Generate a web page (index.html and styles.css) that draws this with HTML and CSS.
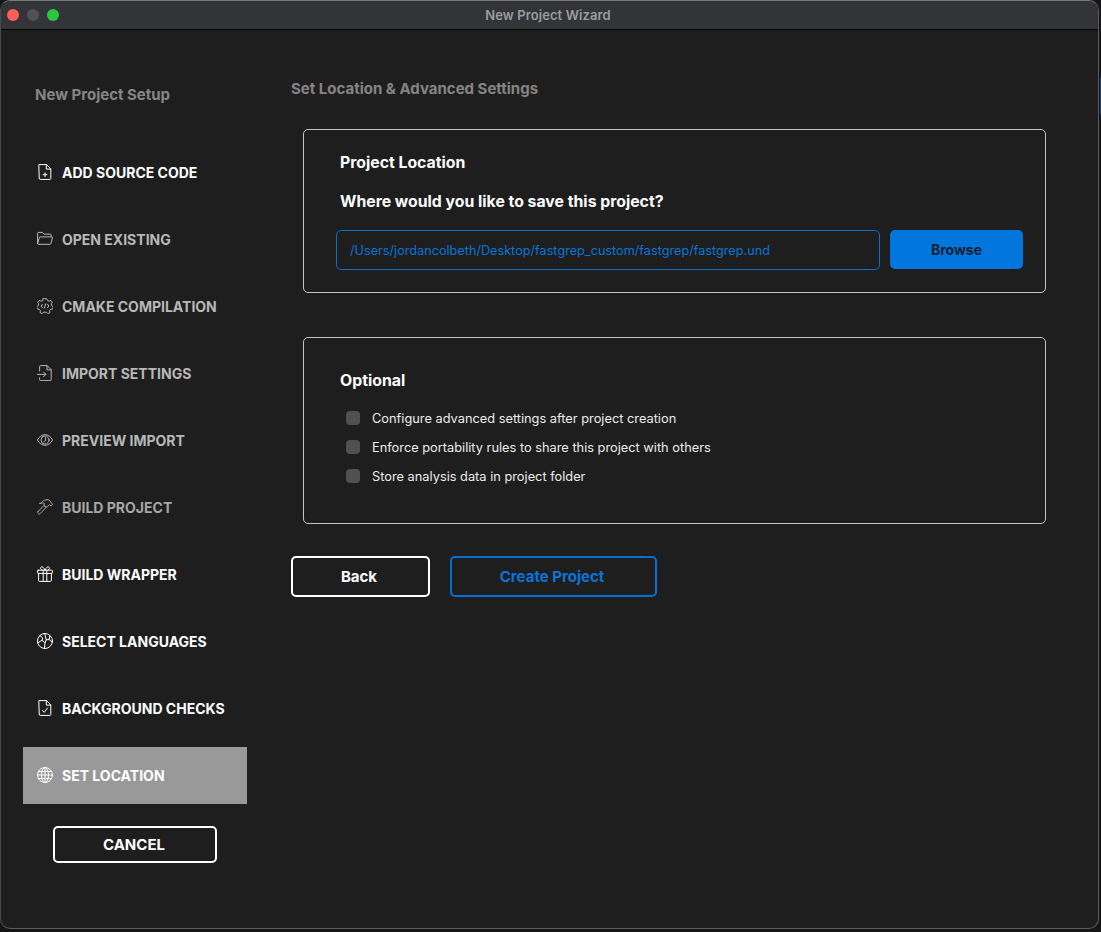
FILE: index.html
```html
<!DOCTYPE html>
<html lang="en">
<head>
<meta charset="utf-8">
<title>New Project Wizard</title>
<link rel="stylesheet" href="styles.css">
</head>
<body>
<div class="window">
  <header class="titlebar">
    <div class="lights"><span class="light red"></span><span class="light grey"></span><span class="light green"></span></div>
    <div class="wintitle">New Project Wizard</div>
  </header>
  <div class="content">
    <aside class="sidebar">
      <h2 class="side-title">New Project Setup</h2>
      <nav class="nav">
        <div class="nav-item bright"><svg class="ico" viewBox="0 0 16 16"><path d="M2.200.6h7.300L13.800 5v9.400a1 1 0 0 1-1 1H3.200a1 1 0 0 1-1-1z M9.300.6v4.500h4.500"/><path d="M8 8.800v3.800M6.100 10.700h3.800"/></svg><span>ADD SOURCE CODE</span></div>
        <div class="nav-item soft"><svg class="ico" viewBox="0 0 16 16"><path d="M.6 12.500V2.400a1 1 0 0 1 1-1h3.800l1.500 1.700h6.300a1 1 0 0 1 1 1v1.400"/><path d="M.6 12.600l1.700-5.900a1 1 0 0 1 1-.8h11.300a.8.8 0 0 1 .8 1l-1.500 5.600a1 1 0 0 1-1 .8H1.800a1 1 0 0 1-1.200-.7z"/></svg><span>OPEN EXISTING</span></div>
        <div class="nav-item soft"><svg class="ico" viewBox="0 0 16 16"><path d="M6.300.7h3.400l.7 1.800 1.700.7 1.700-.8 1.500 1.800-1 1.600.4 1.900 1.600 1-.6 2.300-1.900.2-1.200 1.500.3 1.900-2.200 1-1.300-1.400H6.600l-1.300 1.400-2.200-1 .3-1.900-1.200-1.500-1.900-.2-.6-2.300 1.600-1 .4-1.900-1-1.600 1.500-1.800 1.700.8 1.700-.7z"/><path d="M5.500 6.300L4 8l1.500 1.700M10.500 6.300L12 8l-1.500 1.700M8.700 5.900L7.300 10.100"/></svg><span>CMAKE COMPILATION</span></div>
        <div class="nav-item soft"><svg class="ico" viewBox="0 0 16 16"><path d="M2.600 6V1.600a1 1 0 0 1 1-1h6.600l4 4v10a1 1 0 0 1-1 1H3.600a1 1 0 0 1-1-1v-1.800"/><path d="M10 .7v4.200h4.100"/><path d="M.5 9.400h8.300M6.500 7l2.400 2.400-2.400 2.400"/></svg><span>IMPORT SETTINGS</span></div>
        <div class="nav-item soft"><svg class="ico" viewBox="0 0 16 16"><path d="M.4 8C2.300 4.600 5 2.700 8 2.700s5.700 1.900 7.600 5.300c-1.900 3.400-4.600 5.300-7.600 5.300S2.300 11.400.4 8z"/><circle cx="8" cy="8" r="4"/><path d="M8.600 5.800v2.800l-1.700.9"/></svg><span>PREVIEW IMPORT</span></div>
        <div class="nav-item dim"><svg class="ico" viewBox="0 0 16 16"><path d="M.9 12.700l6-6.200 2.100 1.900-5.900 6.300a1 1 0 0 1-1.400.1l-.8-.7a1 1 0 0 1 0-1.400z"/><path d="M3.800 4.300C5.800 1.200 9.500.1 12.200 1l3.400 4.400-1.500 1.600-1.500-1.200-3.600 2.600-2.100-1.900.5-2.100c-1.200-.5-2.700-.4-4.600-.1z"/></svg><span>BUILD PROJECT</span></div>
        <div class="nav-item bright"><svg class="ico" viewBox="0 0 16 16"><rect x=".6" y="4.200" width="14.800" height="3.200" rx=".6"/><path d="M1.600 7.400v7a1 1 0 0 0 1 1h10.800a1 1 0 0 0 1-1v-7M6.200 4.200v11.200M9.800 4.200v11.200"/><path d="M8 4.100C6.800 1.400 5.400.5 4.300 1c-1.100.4-1 2.300.5 3.100M8 4.100C9.200 1.400 10.600.5 11.700 1c1.100.4 1 2.300-.5 3.100"/></svg><span>BUILD WRAPPER</span></div>
        <div class="nav-item bright"><svg class="ico" viewBox="0 0 16 16"><circle cx="8" cy="8" r="7.500"/><path d="M2.800 2.600L5.800 5 5 7.300l3 2.500 1.200-3 2.900-.3.700-3.500M5 7.300L.8 9.800M8 9.800l-.5 5.700M9.200 6.800L7.700.5M12.100 6.500l3.300 2.700"/></svg><span>SELECT LANGUAGES</span></div>
        <div class="nav-item bright"><svg class="ico" viewBox="0 0 16 16"><path d="M2.200.6h7.300L13.800 5v9.400a1 1 0 0 1-1 1H3.200a1 1 0 0 1-1-1z M9.300.6v4.500h4.500"/><path d="M5.400 10.400l1.800 1.900 3.300-4.300"/></svg><span>BACKGROUND CHECKS</span></div>
        <div class="nav-item active"><svg class="ico" viewBox="0 0 16 16"><circle cx="8" cy="8" r="7.500"/><ellipse cx="8" cy="8" rx="3.500" ry="7.500"/><path d="M8 .5v15M.5 8h15M1.500 4.500h13M1.500 11.500h13"/></svg><span>SET LOCATION</span></div>
      </nav>
      <button class="cancel">CANCEL</button>
    </aside>
    <main class="main">
      <h1 class="main-title">Set Location &amp; Advanced Settings</h1>
      <section class="card card-location">
        <h3 class="card-title">Project Location</h3>
        <p class="question">Where would you like to save this project?</p>
        <div class="path-row">
          <div class="path-field">/Users/jordancolbeth/Desktop/fastgrep_custom/fastgrep/fastgrep.und</div>
          <button class="browse">Browse</button>
        </div>
      </section>
      <section class="card card-optional">
        <h3 class="card-title">Optional</h3>
        <div class="checks">
          <label class="check"><span class="box"></span>Configure advanced settings after project creation</label>
          <label class="check"><span class="box"></span>Enforce portability rules to share this project with others</label>
          <label class="check"><span class="box"></span>Store analysis data in project folder</label>
        </div>
      </section>
      <div class="actions">
        <button class="btn back">Back</button>
        <button class="btn create">Create Project</button>
      </div>
    </main>
  </div>
</div>
<div class="edge-mark"></div>
</body>
</html>
```
FILE: styles.css
```css
* { box-sizing: border-box; }
html, body { margin: 0; height: 100%; }
body {
  position: relative;
  background: #151515;
  font-family: Inter, "Liberation Sans", sans-serif;
  overflow: hidden;
}
.window {
  position: relative;
  width: 1099px;
  height: 929px;
  background: #1e1e1e;
  border: 1px solid #5c5c5c;
  border-top-color: #7a7a7a;
  border-left-color: #4a4a4a;
  border-radius: 10px;
  overflow: hidden;
  display: flex;
  flex-direction: column;
}
.titlebar {
  position: relative;
  height: 29px;
  flex: none;
  background: #333438;
  border-bottom: 1px solid #050505;
  display: flex;
  align-items: center;
  justify-content: center;
  padding-right: 3px;
}
.lights {
  position: absolute;
  left: 6px;
  top: 8px;
  display: flex;
  gap: 8px;
}
.light { width: 12px; height: 12px; border-radius: 50%; }
.red { background: #fe5f57; }
.grey { background: #515155; }
.green { background: #2ac840; }
.wintitle {
  font-size: 13px;
  font-weight: 600;
  color: #9c9c9e;
  letter-spacing: .1px;
}
.content { flex: 1; display: flex; min-height: 0; }
.sidebar {
  width: 246px;
  flex: none;
  padding: 56px 0 0 22px;
  display: flex;
  flex-direction: column;
}
.side-title {
  margin: 0 0 40px 12px;
  font-size: 15px;
  line-height: 18px;
  font-weight: 700;
  color: #858585;
}
.nav { display: flex; flex-direction: column; gap: 10px; }
.nav-item {
  height: 57px;
  width: 224px;
  padding-left: 14px;
  display: flex;
  align-items: center;
  gap: 9px;
  font-size: 14px;
  font-weight: 700;
  white-space: nowrap;
}
.ico {
  width: 16px;
  height: 16px;
  flex: none;
  margin-top: -1px;
  fill: none;
  stroke: currentColor;
  stroke-width: 1;
  stroke-linejoin: round;
  stroke-linecap: round;
}
.bright { color: #ffffff; }
.soft { color: #b8b8b8; }
.dim { color: #a6a6a6; }
.active { background: #999999; color: #ffffff; }
.cancel {
  align-self: flex-start;
  margin: 22px 0 0 30px;
  width: 164px;
  height: 37px;
  padding: 0 2px 0 0;
  background: transparent;
  border: 2px solid #ffffff;
  border-radius: 5px;
  color: #ffffff;
  font: 700 15px Inter, "Liberation Sans", sans-serif;
}
.main { flex: 1; padding: 50px 0 0 44px; min-width: 0; }
.main-title {
  margin: 0 0 31px;
  font-size: 15px;
  line-height: 18px;
  font-weight: 700;
  color: #858585;
}
.card {
  width: 743px;
  margin-left: 12px;
  border: 1px solid #c4c4c4;
  border-radius: 5px;
  padding-left: 36px;
}
.card-location { height: 164px; padding-top: 23px; }
.card-optional { height: 187px; margin-top: 44px; padding-top: 33px; }
.card-title {
  margin: 0;
  font-size: 15.800px;
  line-height: 19px;
  font-weight: 700;
  color: #ffffff;
}
.question {
  margin: 20px 0 19px;
  font-size: 15.800px;
  line-height: 19px;
  font-weight: 700;
  color: #ffffff;
}
.path-row { display: flex; gap: 10px; margin-left: -4px; }
.path-field {
  width: 544px;
  height: 40px;
  padding-left: 13px;
  border: 1px solid #0a6ecb;
  border-radius: 5px;
  display: flex;
  align-items: center;
  color: #0a74d8;
  font-size: 12.680px;
}
.browse {
  width: 133px;
  height: 39px;
  background: #0276dc;
  border: 0;
  border-radius: 5px;
  color: #122033;
  font: 700 14px Inter, "Liberation Sans", sans-serif;
}
.checks { margin-top: 19px; display: flex; flex-direction: column; gap: 11px; }
.check {
  display: flex;
  align-items: center;
  gap: 12px;
  height: 18px;
  margin-left: 6px;
  font-size: 12.800px;
  color: #ececec;
}
.box {
  width: 14px;
  height: 14px;
  border-radius: 4px;
  background: #505050;
  flex: none;
}
.actions { display: flex; gap: 20px; margin-top: 32px; }
.btn {
  height: 41px;
  padding: 0 3px 0 0;
  background: transparent;
  border-radius: 5px;
  font: 700 15px Inter, "Liberation Sans", sans-serif;
}
.back { width: 139px; border: 2px solid #ffffff; color: #ffffff; }
.create { width: 207px; border: 2px solid #0670d2; color: #0a74d8; }
.edge-mark {
  position: absolute;
  left: 1100px;
  top: 78px;
  width: 1px;
  height: 36px;
  background: #10497c;
}
```
